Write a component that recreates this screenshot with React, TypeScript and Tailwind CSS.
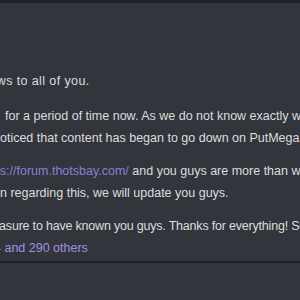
import React from 'react';

export default function App() {
  return (
    <div className="w-[300px] h-[300px] overflow-hidden bg-[#32353b] flex flex-col font-['Liberation_Sans',Arial,sans-serif] text-[12.5px] leading-[22px] text-[#dcddde]">
      <div className="h-[3px] bg-[#1f2124] shrink-0" />
      <div className="flex flex-col pt-[67px] whitespace-nowrap">
        <p className="ml-[-18px] tracking-[0.4px]">news to all of you.</p>
        <div className="mt-[13px]">
          <p className="ml-[5px]">for a period of time now. As we do not know exactly when</p>
          <p className="ml-[-7px]">noticed that content has began to go down on PutMega</p>
        </div>
        <div className="mt-[11px]">
          <p className="ml-[-21px]">
            <span className="text-[#8e7fd6]">https://forum.thotsbay.com/</span> and you guys are more than welcome
          </p>
          <p className="ml-[-7px]">on regarding this, we will update you guys.</p>
        </div>
        <p className="mt-[11px] ml-[-17px] tracking-[-0.2px]">pleasure to have known you guys. Thanks for everything! See</p>
        <p className="ml-[-6px] text-[#a190e0]">4 and 290 others</p>
      </div>
      <div className="mt-auto mb-[37px] h-[2px] bg-[#202225]" />
    </div>
  );
}
